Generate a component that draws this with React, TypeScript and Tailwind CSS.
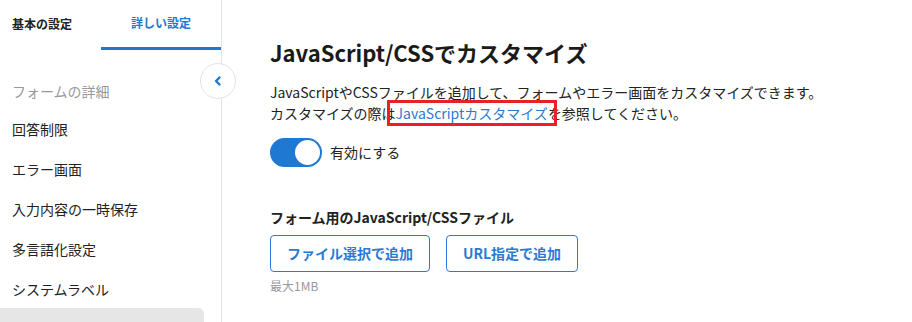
import React from "react";

const font = { fontFamily: '"Noto Sans CJK JP", "Noto Sans", sans-serif' };

export default function App() {
  const items = ["回答制限", "エラー画面", "入力内容の一時保存", "多言語化設定", "システムラベル"];
  return (
    <div className="w-[912px] h-[322px] overflow-hidden bg-white flex text-[#222]" style={font}>
      <div className="relative w-[222px] shrink-0 border-r border-[#e3e3e3]">
        <div className="flex h-[50px]">
          <div className="w-[101px] flex items-center pl-[12px] pb-[2px] text-[12px] font-bold text-[#222]">基本の設定</div>
          <div className="flex-1 flex items-center justify-center pb-[2px] text-[12px] font-bold text-[#1f78d1] border-b-[3px] border-[#1f78d1]">
            詳しい設定
          </div>
        </div>
        <div className="pt-[29px] pl-[12px] text-[14px] text-[#999] leading-[24px]">フォームの詳細</div>
        <div className="pt-[6px]">
          {items.map((t) => (
            <div key={t} className="h-[40px] flex items-center pl-[12px] text-[14px] text-[#222]">
              {t}
            </div>
          ))}
        </div>
        <div className="mt-[-1px] w-[204px] h-[20px] bg-[#e6e6e6] rounded-tr-[6px]"></div>
        <div className="absolute left-[200px] top-[63px] w-[36px] h-[36px] rounded-full bg-white border border-[#e3e3e3] flex items-center justify-center">
          <svg width="12" height="12" viewBox="0 0 12 12">
            <path d="M7.5 2.5 L4 6 L7.5 9.5" fill="none" stroke="#1f78d1" strokeWidth="2.4" strokeLinecap="round" strokeLinejoin="round" />
          </svg>
        </div>
      </div>
      <div className="flex-1 pl-[48px] pt-[38px]">
        <h1 className="text-[22px] font-bold leading-[28px] text-[#1a1a1a]">JavaScript/CSSでカスタマイズ</h1>
        <div className="mt-[16px] text-[14px] leading-[21px] text-[#222]">
          <p>JavaScriptやCSSファイルを追加して、フォームやエラー画面をカスタマイズできます。</p>
          <p>
            カスタマイズの際は
            <span className="relative text-[#2a7ad3]">
              JavaScriptカスタマイズ
              <span className="absolute left-[-9px] right-[-9px] top-[-3px] bottom-[-3px] border-[3px] border-[#e8202a]"></span>
            </span>
            を参照してください。
          </p>
        </div>
        <div className="mt-[14px] flex items-center gap-[8px]">
          <div className="w-[52px] h-[29px] rounded-full bg-[#1f78d1] relative">
            <div className="absolute right-[2px] top-[2px] w-[25px] h-[25px] rounded-full bg-white"></div>
          </div>
          <span className="text-[14px]">有効にする</span>
        </div>
        <div className="mt-[40px] text-[14px] font-bold leading-[20px]">フォーム用のJavaScript/CSSファイル</div>
        <div className="mt-[8px] flex gap-[16px]">
          <button className="w-[160px] h-[37px] rounded-[4px] border border-[#2a7ad3] text-[#2a7ad3] text-[14px] font-bold bg-white">
            ファイル選択で追加
          </button>
          <button className="w-[132px] h-[37px] rounded-[4px] border border-[#2a7ad3] text-[#2a7ad3] text-[14px] font-bold bg-white">
            URL指定で追加
          </button>
        </div>
        <div className="mt-[5px] text-[12px] text-[#999]">最大1MB</div>
      </div>
    </div>
  );
}
